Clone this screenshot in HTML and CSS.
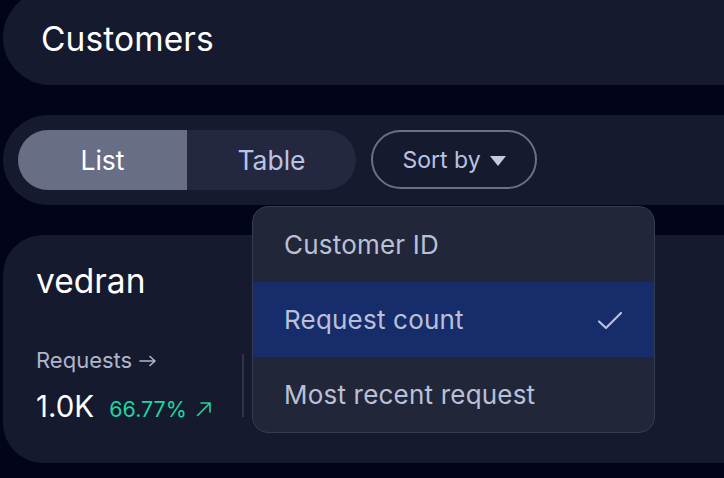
FILE: index.html
```html
<!DOCTYPE html>
<html lang="en">
<head>
<meta charset="utf-8">
<title>Customers</title>
<link rel="stylesheet" href="styles.css">
</head>
<body>
<div class="page">
  <header class="title-bar">
    <h1 class="title">Customers</h1>
  </header>

  <div class="toolbar">
    <div class="seg">
      <button class="seg-btn seg-active">List</button>
      <button class="seg-btn">Table</button>
    </div>
    <button class="sort">Sort by <span class="caret"></span></button>

    <div class="menu">
      <div class="menu-item">Customer ID</div>
      <div class="menu-item menu-selected">Request count
        <svg class="check" width="26" height="20" viewBox="0 0 26 20"><polyline points="2,10.5 9,17 24,2" fill="none" stroke="#b9c0d8" stroke-width="2.2" stroke-linecap="round" stroke-linejoin="round"/></svg>
      </div>
      <div class="menu-item">Most recent request</div>
    </div>
  </div>

  <section class="card">
    <div class="card-name">vedran</div>
    <div class="stats">
      <div class="stat">
        <div class="stat-label">Requests
          <svg class="label-arrow" width="18" height="12" viewBox="0 0 18 12"><path d="M1 6H16M11 1.5L16 6L11 10.5" fill="none" stroke="#aeb5cc" stroke-width="1.6" stroke-linecap="round" stroke-linejoin="round"/></svg>
        </div>
        <div class="stat-values">
          <span class="stat-num">1.0K</span>
          <span class="stat-change">66.77%
            <svg class="up-arrow" width="16" height="16" viewBox="0 0 16 16"><path d="M1.5 14.5L14 2M5 2H14V11" fill="none" stroke="#1fd69e" stroke-width="1.6" stroke-linecap="round" stroke-linejoin="round"/></svg>
          </span>
        </div>
      </div>
      <div class="divider"></div>
    </div>
  </section>
</div>
</body>
</html>
```

FILE: styles.css
```css
* { box-sizing: border-box; }

html, body {
  margin: 0;
  padding: 0;
  background: #02041a;
  overflow: hidden;
  font-family: "Inter", "Noto Sans", sans-serif;
}

.page {
  width: 724px;
  height: 478px;
  padding-left: 3px;
  overflow: hidden;
}

.title-bar {
  margin-top: -10px;
  margin-right: -60px;
  height: 95px;
  background: #151a2e;
  border-radius: 48px 0 0 48px;
  display: flex;
  align-items: center;
  padding-left: 38px;
  padding-top: 4px;
}

.title {
  margin: 0;
  font-size: 33.5px;
  letter-spacing: 0.1px;
  font-weight: 400;
  color: #ffffff;
  line-height: 1;
}

.toolbar {
  position: relative;
  margin-top: 30px;
  margin-right: -60px;
  height: 90px;
  background: #151a2e;
  border-radius: 45px 0 0 45px;
  padding-left: 15px;
  display: flex;
  align-items: center;
  gap: 15px;
}

.seg {
  display: flex;
  height: 60px;
  border-radius: 30px;
  overflow: hidden;
  background: #232840;
}

.seg-btn {
  width: 169px;
  height: 60px;
  border: 0;
  background: transparent;
  font-family: inherit;
  font-size: 26.5px;
  color: #b9c3e2;
  padding: 0;
}

.seg-active {
  background: #676e86;
  color: #ffffff;
}

.sort {
  width: 166px;
  height: 59px;
  margin-top: -1px;
  border: 2px solid #6b7089;
  border-radius: 30px;
  background: transparent;
  font-family: inherit;
  font-size: 23px;
  color: #b9c3e2;
  display: flex;
  align-items: center;
  justify-content: center;
  gap: 9px;
  padding: 0;
}

.caret {
  width: 0;
  height: 0;
  border-left: 8px solid transparent;
  border-right: 8px solid transparent;
  border-top: 10px solid #c3c9e2;
  margin-top: 2px;
}

.menu {
  position: absolute;
  left: 249px;
  top: 91px;
  width: 403px;
  background: #222639;
  border: 1px solid #363b54;
  border-radius: 16px;
  overflow: hidden;
  z-index: 5;
}

.menu-item {
  height: 75px;
  padding: 0 31px 0 31px;
  display: flex;
  align-items: center;
  justify-content: space-between;
  font-size: 26px;
  letter-spacing: 0.2px;
  color: #b9c0d8;
}

.menu-selected {
  background: #172d6b;
}

.check { display: block; margin-top: 2px; }

.card {
  margin-top: 30px;
  margin-right: -60px;
  height: 228px;
  background: #151a2e;
  border-radius: 40px 0 0 40px;
  padding: 27px 0 0 33px;
}

.card-name {
  font-size: 33.5px;
  line-height: 38px;
  color: #ffffff;
}

.stats {
  display: flex;
  margin-top: 47px;
}

.stat {
  width: 206px;
}

.stat-label {
  font-size: 22px;
  line-height: 26px;
  color: #aeb5cc;
  display: flex;
  align-items: center;
  gap: 7px;
}

.label-arrow { display: block; margin-top: 1px; }

.stat-values {
  margin-top: 16px;
  display: flex;
  align-items: baseline;
  gap: 15px;
}

.stat-num {
  font-size: 29.5px;
  line-height: 35px;
  color: #ffffff;
}

.stat-change {
  font-size: 21.5px;
  color: #1fd69e;
}

.up-arrow { margin-left: 3px; }

.divider {
  width: 2px;
  height: 63px;
  margin-top: 7px;
  background: #2f344a;
}
```
